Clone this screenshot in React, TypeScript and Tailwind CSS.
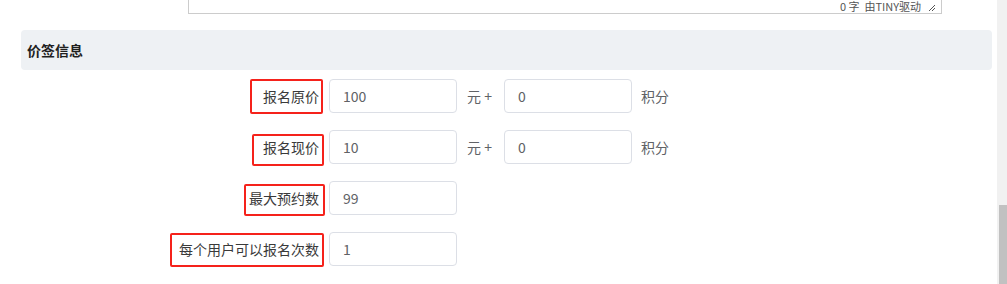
import React from "react"

const font = { fontFamily: '"Noto Sans CJK SC", "Noto Sans", sans-serif' }

interface PriceRow {
  label: string
  value: string
  points?: string
  // hand drawn red box around the label, offsets relative to the row
  box: string
}

const rows: PriceRow[] = [
  { label: "报名原价", value: "100", points: "0", box: "left-[250px] top-0 w-[73px] h-[35px]" },
  { label: "报名现价", value: "10", points: "0", box: "left-[252px] top-[4px] w-[72px] h-[32px]" },
  { label: "最大预约数", value: "99", box: "left-[244px] top-[3px] w-[81px] h-[32px]" },
  { label: "每个用户可以报名次数", value: "1", box: "left-[170px] top-[1px] w-[154px] h-[34px]" },
]

function Field({ value }: { value: string }) {
  return (
    <div className="w-[128px] h-[34px] border border-[#dcdfe6] rounded-[4px] bg-white flex items-center pl-[13px] text-[14px] text-[#606266]">
      {value}
    </div>
  )
}

export default function App() {
  return (
    <div className="flex w-[1007px] h-[284px] bg-white overflow-hidden" style={font}>
      <div className="flex-1 flex flex-col">
        {/* Editor bottom (tail of the rich text box) */}
        <div className="ml-[188px] w-[754px] h-[14px] border-l border-r border-b border-[#cccccc] flex items-center justify-end pr-[5px]">
          <span className="text-[11px] leading-[13px] text-[#555] mr-[7px]">0 字 &nbsp;由TINY驱动</span>
          <svg width="8" height="8" viewBox="0 0 8 8" className="mt-[2px]">
            <path d="M7 1L1 7M7 4L4 7" stroke="#555" strokeWidth="1" />
          </svg>
        </div>

        {/* Section header */}
        <div className="mt-[16px] ml-[21px] w-[971px] h-[40px] rounded-[4px] bg-[#eef1f4] flex items-center pl-[6px]">
          <span className="text-[14px] font-bold text-[#1f1f1f]">价签信息</span>
        </div>

        {/* Form rows */}
        <div className="mt-[9px] flex flex-col gap-[17px]">
          {rows.map((row) => (
            <div key={row.label} className="relative flex items-center h-[34px]">
              <div className="w-[329px] pr-[10px] text-right text-[14px] text-[#3a3a3a]">{row.label}</div>
              <Field value={row.value} />
              {row.points !== undefined && (
                <>
                  <span className="ml-[10px] text-[14px] text-[#606266]">元 +</span>
                  <div className="ml-[12px]">
                    <Field value={row.points} />
                  </div>
                  <span className="ml-[9px] text-[14px] text-[#606266]">积分</span>
                </>
              )}
              {/* Red annotation box */}
              <div className={`absolute ${row.box} border-2 border-[#f5221b] rounded-[2px] pointer-events-none`} />
            </div>
          ))}
        </div>
      </div>

      {/* Scrollbar */}
      <div className="w-[10px] h-full bg-[#f1f1f1] flex flex-col items-end">
        <div className="mt-[205px] w-[8px] flex-1 bg-[#c1c1c1]" />
      </div>
    </div>
  )
}
